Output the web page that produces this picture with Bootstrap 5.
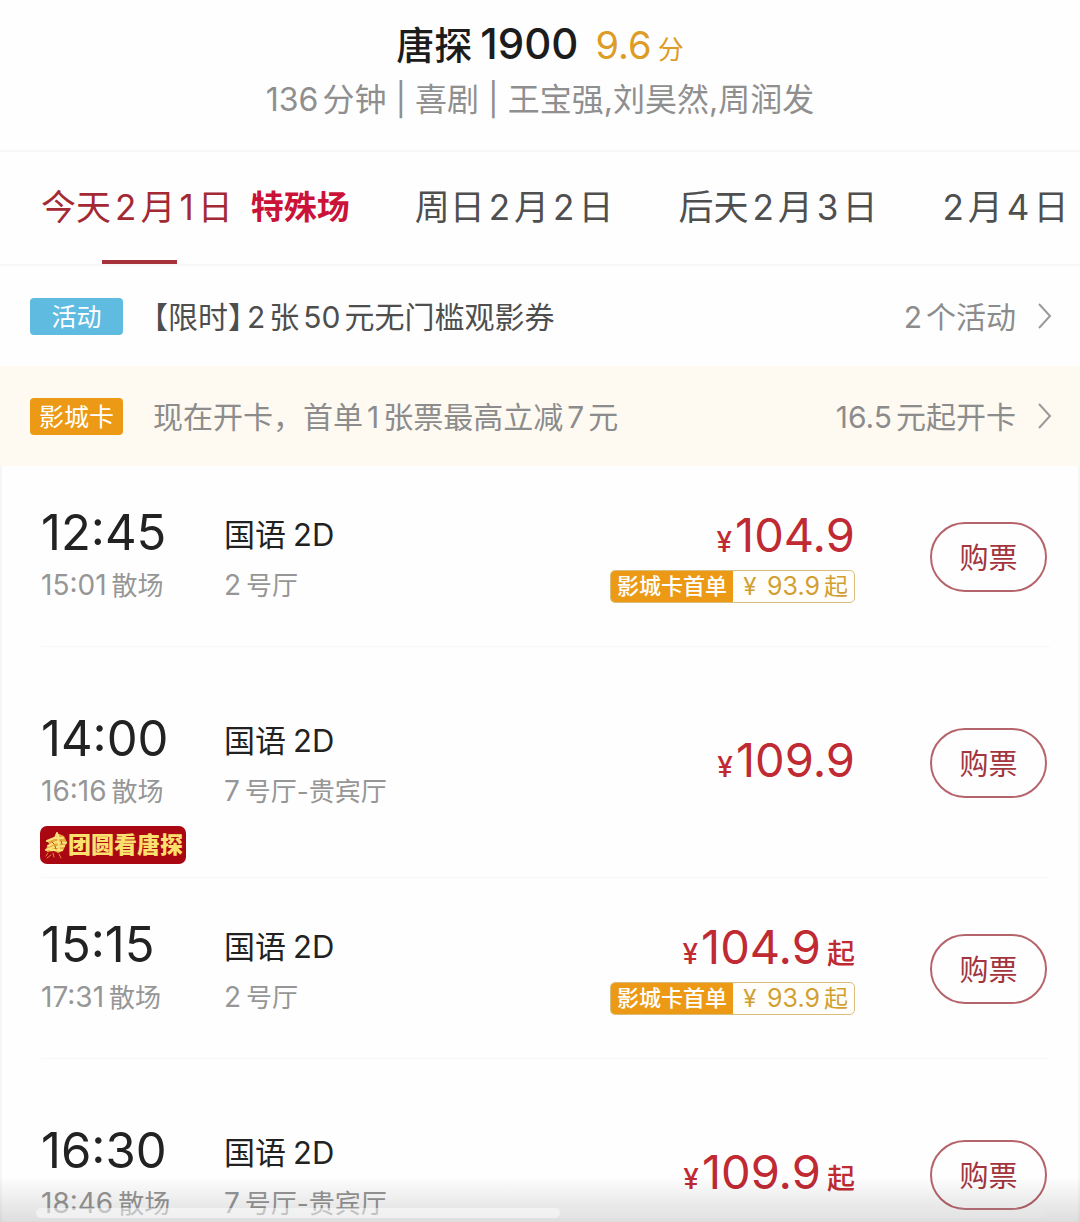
<!DOCTYPE html>
<html lang="zh-CN">
<head>
<meta charset="utf-8">
<meta name="viewport" content="width=device-width, initial-scale=1">
<title>唐探1900 场次</title>
<link href="https://cdn.jsdelivr.net/npm/bootstrap@5.3.0/dist/css/bootstrap.min.css" rel="stylesheet">
<style>
  body { font-family: Inter, "Noto Sans CJK SC", sans-serif; color: #222; background: #fefefe; }
  .n { margin: 0 4px; }
  .n-start { margin-right: 4px; }
  .film-head { padding-top: 16px; height: 152px; border-bottom: 2px solid #f7f7f7; }
  .film-name { font-size: 38px; line-height: 56px; font-weight: 500; color: #1c1c1c; gap: 8px; }
  .film-year { font-size: 42px; }
  .film-score { font-size: 38px; color: #dd9c26; margin-left: 9px; font-weight: 400; }
  .film-score small { font-size: 26px; margin-left: 6px; }
  .film-meta { font-size: 32px; line-height: 44px; color: #8f8f8f; }
  .day-tabs { height: 114px; padding-left: 41px; gap: 65px; border-bottom: 2px solid #f7f7f7; }
  .day-tab { font-size: 35px; line-height: 110px; color: #4f4f4f; text-decoration: none; }
  .day-tab.on { color: #a32a34; }
  .day-line { left: 61px; width: 75px; height: 4px; bottom: 0; background: #a8323c; }
  .day-special { font-size: 33px; font-weight: 700; color: #cb1238; margin-left: 18px; }
  .promo { height: 100px; padding: 0 28px 0 30px; font-size: 30px; color: #4e4e4e; text-decoration: none; }
  .promo-card { background: #fefaf2; color: #8c8c8c; }
  .promo-tag { width: 93px; height: 37px; line-height: 39px; border-radius: 4px; font-size: 25px; color: #fff; background: #5fbbe0; }
  .promo-card .promo-tag { background: #ec9a16; }
  .promo-text { margin-left: 30px; padding-top: 2px; }
  .half { font-feature-settings: "halt"; }
  .promo-more { color: #8c8c8c; padding-top: 2px; }
  .promo svg { margin-left: 22px; }
  .shows { border-left: 2px solid #f5f6f6; border-right: 2px solid #f5f6f6; }
  .show-row { margin: 0 28px 0 39px; padding: 36px 3px 40px 0; border-bottom: 1px solid #f7f7f7; }
  .show-row.roomy { padding-top: 61px; }
  .show-row.tagged { padding-bottom: 11px; }
  .col-time { width: 183px; }
  .t-start { font-size: 49px; line-height: 62px; color: #222; }
  .t-kind { font-size: 31px; line-height: 66px; height: 62px; color: #222; }
  .t-kind .n { margin-left: 7px; }
  .t-sub { font-size: 26px; line-height: 42px; height: 42px; color: #969696; }
  .t-sub .n-start { font-size: 28px; margin-right: 5px; }
  .price-col { margin-right: 75px; min-height: 104px; }
  .price { font-size: 47px; line-height: 60px; height: 60px; color: #bf2a33; }
  .price .yen { font-size: 28px; line-height: 1; font-weight: 500; margin-right: 3px; }
  .price .from { font-size: 28px; line-height: 1; font-weight: 500; margin-left: 6px; }
  .deal { height: 33px; line-height: 31px; font-size: 22px; border: 1px solid #d9bd7c; border-radius: 5px; overflow: hidden; background: #fffefa; color: #d2a032; margin-top: 5px; }
  .deal-name { background: #ec9a16; color: #fff; padding: 0 6px; font-weight: 500; }
  .deal-price { padding: 0 6px 0 10px; font-size: 24px; }
  .deal-price .n { font-size: 25px; }
  .buy { width: 117px; height: 70px; padding: 3px 0 0; font-size: 29px; color: #a2353d; border: 2px solid #b5646b; border-radius: 35px; background: transparent; margin-top: 20px; }
  .fest { height: 38px; border-radius: 7px; background: #a90712; color: #fbe06e; font-size: 23px; font-weight: 900; padding: 0 3px 0 4px; margin: 14px 0 0 -1px; }
  .fade-bar { height: 46px; background: linear-gradient(rgba(0,0,0,0), rgba(0,0,0,.13)); }
  .track { left: 36px; right: 36px; bottom: 4px; height: 10px; border-radius: 5px; background: rgba(255,255,255,.1); }
  .track-fill { width: 52%; height: 10px; border-radius: 5px; background: rgba(255,255,255,.45); }
</style>
<script src="https://cdn.jsdelivr.net/npm/bootstrap@5.3.0/dist/js/bootstrap.bundle.min.js"></script>
</head>
<body>
<div class="vh-100 overflow-hidden position-relative">
  <header class="film-head text-center">
    <h1 class="film-name d-flex justify-content-center align-items-baseline mb-0"><span>唐探</span><span class="film-year">1900</span><span class="film-score">9.6<small>分</small></span></h1>
    <div class="film-meta"><span class="n-start">136</span>分钟 | 喜剧 | 王宝强,刘昊然,周润发</div>
  </header>

  <nav class="day-tabs d-flex text-nowrap overflow-hidden">
    <a href="#" class="day-tab on position-relative d-flex">今天<span class="n">2</span>月<span class="n">1</span>日<span class="day-special">特殊场</span><span class="day-line position-absolute"></span></a>
    <a href="#" class="day-tab">周日<span class="n">2</span>月<span class="n">2</span>日</a>
    <a href="#" class="day-tab">后天<span class="n">2</span>月<span class="n">3</span>日</a>
    <a href="#" class="day-tab"><span class="n-start">2</span>月<span class="n">4</span>日</a>
  </nav>

  <a href="#" class="promo d-flex align-items-center text-nowrap">
    <span class="promo-tag text-center">活动</span>
    <span class="promo-text"><span class="half">【限时】</span><span class="n">2</span>张<span class="n">50</span>元无门槛观影券</span>
    <span class="promo-more ms-auto"><span class="n-start">2</span>个活动</span>
    <svg width="14" height="26" viewBox="0 0 14 26" fill="none" stroke="#9a9a9a" stroke-width="2"><path d="M1 1l11 12L1 25"/></svg>
  </a>
  <a href="#" class="promo promo-card d-flex align-items-center text-nowrap">
    <span class="promo-tag text-center">影城卡</span>
    <span class="promo-text">现在开卡，首单<span class="n">1</span>张票最高立减<span class="n">7</span>元</span>
    <span class="promo-more ms-auto"><span class="n-start">16.5</span>元起开卡</span>
    <svg width="14" height="26" viewBox="0 0 14 26" fill="none" stroke="#9a9a9a" stroke-width="2"><path d="M1 1l11 12L1 25"/></svg>
  </a>

  <main class="shows">
    <section class="show-row d-flex align-items-start text-nowrap">
      <div class="col-time"><div class="t-start">12:45</div><div class="t-sub"><span class="n-start">15:01</span>散场</div></div>
      <div><div class="t-kind">国语<span class="n">2D</span></div><div class="t-sub"><span class="n-start">2</span>号厅</div></div>
      <div class="price-col ms-auto d-flex flex-column align-items-end justify-content-center">
        <div class="price"><span class="yen">¥</span>104.9</div>
        <div class="deal d-flex"><span class="deal-name">影城卡首单</span><span class="deal-price">¥ <span class="n">93.9</span>起</span></div>
      </div>
      <button type="button" class="buy">购票</button>
    </section>

    <section class="show-row roomy tagged d-flex align-items-start text-nowrap">
      <div class="col-time"><div class="t-start">14:00</div><div class="t-sub"><span class="n-start">16:16</span>散场</div>
        <div class="fest d-inline-flex align-items-center">
          <svg width="24" height="30" viewBox="0 0 24 30" fill="none" stroke-linecap="round"><path d="M13 3l7 3 3 6-4 9-5 2-4-2-7 1-1-4 4-3-3-4 7-3z" fill="#e9a83a"/><path d="M13 3l-2 5M3 11l7-3 9 0M4 16l8-4 10 1M2 20l8-3 10-1M14 5l1 16M7 20l11 0" stroke="#fbe27c" stroke-width="2"/><path d="M8 12l2 2M17 11l1 3M11 16l1 3" stroke="#b8501c" stroke-width="1"/><path d="M4 23l-2 3M9 23l1 4M15 24l2 4M3 28l4-3" stroke="#e88c35" stroke-width="1"/></svg>
          <span>团圆看唐探</span>
        </div>
      </div>
      <div><div class="t-kind">国语<span class="n">2D</span></div><div class="t-sub"><span class="n-start">7</span>号厅-贵宾厅</div></div>
      <div class="price-col ms-auto d-flex flex-column align-items-end justify-content-center">
        <div class="price"><span class="yen">¥</span>109.9</div>
      </div>
      <button type="button" class="buy">购票</button>
    </section>

    <section class="show-row d-flex align-items-start text-nowrap">
      <div class="col-time"><div class="t-start">15:15</div><div class="t-sub"><span class="n-start">17:31</span>散场</div></div>
      <div><div class="t-kind">国语<span class="n">2D</span></div><div class="t-sub"><span class="n-start">2</span>号厅</div></div>
      <div class="price-col ms-auto d-flex flex-column align-items-end justify-content-center">
        <div class="price"><span class="yen">¥</span>104.9<span class="from">起</span></div>
        <div class="deal d-flex"><span class="deal-name">影城卡首单</span><span class="deal-price">¥ <span class="n">93.9</span>起</span></div>
      </div>
      <button type="button" class="buy">购票</button>
    </section>

    <section class="show-row roomy d-flex align-items-start text-nowrap">
      <div class="col-time"><div class="t-start">16:30</div><div class="t-sub"><span class="n-start">18:46</span>散场</div></div>
      <div><div class="t-kind">国语<span class="n">2D</span></div><div class="t-sub"><span class="n-start">7</span>号厅-贵宾厅</div></div>
      <div class="price-col ms-auto d-flex flex-column align-items-end justify-content-center">
        <div class="price"><span class="yen">¥</span>109.9<span class="from">起</span></div>
      </div>
      <button type="button" class="buy">购票</button>
    </section>
  </main>

  <div class="fade-bar position-absolute bottom-0 start-0 end-0">
    <div class="track position-absolute"><div class="track-fill"></div></div>
  </div>
</div>
</body>
</html>
